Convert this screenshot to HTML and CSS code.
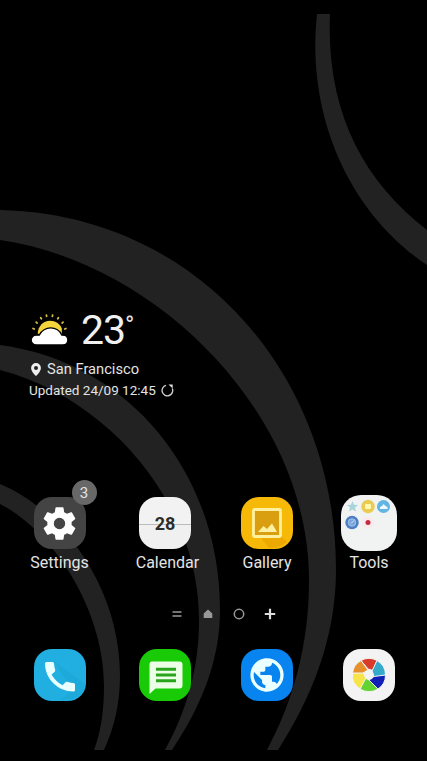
FILE: index.html
```html
<!DOCTYPE html>
<html lang="en">
<head>
<meta charset="utf-8">
<title>Home</title>
<link rel="stylesheet" href="styles.css">
</head>
<body>
<main class="home">
  <svg class="wallpaper" viewBox="0 0 427 761" aria-hidden="true">
    <path d="M317 14C306 115 349 213 427 265V230C362 180 326 110 330 14Z"/>
    <path d="M0 210C195 214 336 373 336 570C336 640 310 700 278 750H267C292 703 309 648 309 580C309 412 155 262 0 240Z"/>
    <path d="M0 345C128 362 220 472 220 610C220 660 202 705 172 750H165C186 712 199 670 199 620C199 500 105 397 0 370Z"/>
    <path d="M0 484C65 511 120 590 120 675C120 702 115 726 104 750H94C101 732 104 710 104 685C104 612 55 532 0 504Z"/>
  </svg>

  <section class="weather">
    <div class="now">
      <svg class="sky" viewBox="0 0 36 31">
        <g stroke="#d9c04a" stroke-width="1.7" stroke-linecap="round">
          <path d="M2 15l1.200.5M5 8.800l1 .9M9.400 4.500l.7 1.100M15 2l.2 1.200M21 2l-.2 1.200M26.700 4.500l-.7 1.100M31.200 8.800l-1 .9M34 15l-1.200.5"/>
        </g>
        <path fill="#f5d53c" d="M6.500 20C7 12.500 12 7.500 18.500 7.500C24 7.500 28 10.500 30 15V21Z"/>
        <path fill="#fff" stroke="#000" stroke-width="1.200" d="M5 31C2.500 31 .2 29 .2 26.300C.2 23.600 2.500 21.500 5 21.500H8C10 17 15 14.500 19 14.500C23.500 14.500 28 17 30 21.500H31C33.700 21.500 35.800 23.600 35.800 26.300C35.800 29 33.700 31 31 31Z"/>
      </svg>
      <span class="temp">23</span><span class="degree">°</span>
    </div>
    <div class="place">
      <svg class="pin" viewBox="0 0 10 13"><path fill="#eee" fill-rule="evenodd" d="M5 0A4.900 4.900 0 0 0 .1 4.900C.1 8.500 5 13 5 13S9.900 8.500 9.900 4.900A4.900 4.900 0 0 0 5 0ZM5 2.900a2 2 0 1 1 0 4a2 2 0 0 1 0-4Z"/></svg>
      <span>San Francisco</span>
    </div>
    <div class="updated">
      <span>Updated 24/09 12:45</span>
      <svg class="refresh" viewBox="0 0 13 13"><path fill="none" stroke="#ccc" stroke-width="1.400" d="M5 1.400A5.300 5.300 0 1 0 11.300 4.500"/><path fill="#ddd" d="M7.500.4h4.200v4.200Z"/></svg>
    </div>
  </section>

  <nav class="row apps">
    <div class="app">
      <div class="tile settings">
        <svg viewBox="0 0 24 24"><path fill="#fff" d="M19.430 12.980c.04-.32.07-.64.07-.98s-.03-.66-.07-.98l2.110-1.650c.19-.15.24-.42.12-.64l-2-3.460c-.12-.22-.39-.3-.61-.22l-2.490 1c-.52-.4-1.080-.73-1.690-.98l-.38-2.650C14.460 2.180 14.250 2 14 2h-4c-.25 0-.46.18-.49.42l-.38 2.650c-.61.25-1.170.59-1.690.98l-2.490-1c-.23-.09-.49 0-.61.22l-2 3.460c-.13.22-.07.49.12.64l2.110 1.650c-.04.32-.07.65-.07.98s.03.66.07.98l-2.110 1.650c-.19.15-.24.42-.12.64l2 3.460c.12.22.39.3.61.22l2.490-1c.52.4 1.080.73 1.690.98l.38 2.650c.03.24.24.42.49.42h4c.25 0 .46-.18.49-.42l.38-2.650c.61-.25 1.170-.59 1.690-.98l2.490 1c.23.09.49 0 .61-.22l2-3.460c.12-.22.07-.49-.12-.64l-2.110-1.650zM12 15.500a3.500 3.500 0 1 1 0-7a3.500 3.500 0 0 1 0 7z"/></svg>
        <span class="badge">3</span>
      </div>
      <span class="label">Settings</span>
    </div>
    <div class="app">
      <div class="tile calendar"><span>28</span></div>
      <span class="label shifted">Calendar</span>
    </div>
    <div class="app">
      <div class="tile gallery">
        <svg viewBox="0 0 52 52"><path fill="#eda900" d="M20 41L40 39L46 45Q40 51 28 51Z"/><rect x="12.500" y="12.500" width="27" height="27" rx="1" fill="#d99f10" stroke="#fff0a0" stroke-width="2.800"/><path fill="#fff0a0" d="M17 35l5.500-6 3.500 3 5-5.500 5 8.500z"/></svg>
      </div>
      <span class="label">Gallery</span>
    </div>
    <div class="app">
      <div class="tile tools">
        <svg viewBox="0 0 56 56">
          <path fill="#a8d4dc" d="M11.500 6l1.500 3.700 4 .3-3 2.600 1 3.900-3.500-2.100-3.500 2.100 1-3.900-3-2.600 4-.3z"/>
          <circle cx="27" cy="11.500" r="6.700" fill="#eacb53"/><rect x="24" y="9" width="6" height="5" rx="1" fill="#fff9b0"/>
          <circle cx="42.500" cy="11.500" r="6.500" fill="#62b5e2"/><path fill="#eafaff" d="M39 14v-2l2-1 1.500-2 2 2 2 1v2z"/>
          <circle cx="11" cy="27.500" r="6.700" fill="#4e7fc4"/><circle cx="11" cy="27.500" r="3.700" fill="#79a5dd" stroke="#a5c8ee"/><path stroke="#d6e7f5" d="M10 28.500l3-3"/>
          <circle cx="27" cy="27.500" r="6" fill="#faeaec"/><circle cx="27" cy="27.500" r="2.500" fill="#c02d43"/>
        </svg>
      </div>
      <span class="label">Tools</span>
    </div>
  </nav>

  <div class="pages">
    <svg viewBox="0 0 12 12"><path stroke="#999" stroke-width="1.600" d="M1.500 4h9M1.500 8h9"/></svg>
    <svg viewBox="0 0 12 12"><path fill="#999" d="M6 1.500L10.300 5.500V10H1.700V5.500Z"/></svg>
    <svg viewBox="0 0 12 12"><circle cx="6" cy="6" r="4.700" fill="none" stroke="#999" stroke-width="1.500"/></svg>
    <svg viewBox="0 0 12 12"><path stroke="#ddd" stroke-width="2.200" d="M.8 6h10.400M6 .8v10.400"/></svg>
  </div>

  <nav class="row dock">
    <div class="app"><div class="tile phone">
      <svg viewBox="0 0 52 52"><path fill="#1ba0d2" d="M20 12L51 35Q50 51 26 51L38 41Z" opacity=".35"/><path fill="#eaffff" d="M12.500 13H18.500Q20 13 20 14.500Q20.200 18 21.200 21Q21.500 22.200 20.500 23L17.500 25.500Q21.500 32.500 28.500 36.300L31.500 33.200Q32.300 32.400 33.500 32.800Q36.500 34 39.500 34Q41 34 41 35.500V41Q41 42.500 39.500 42.500C24 42.500 11 30 11 14.500Q11 13 12.500 13Z"/></svg>
    </div></div>
    <div class="app"><div class="tile messages">
      <svg viewBox="0 0 52 52"><path fill="#eaffe6" d="M13 12.500H40.500Q43.500 12.500 43.500 15.500V36.500Q43.500 39.500 40.500 39.500H16.500L10.500 45V15.500Q10.500 12.500 13 12.500Z"/><path stroke="#28a51c" stroke-width="3" d="M17 20.200h20M17 26h20M17 31.800h20"/></svg>
    </div></div>
    <div class="app"><div class="tile browser">
      <svg viewBox="0 0 24 24"><path fill="#eaffff" d="M12 2C6.480 2 2 6.480 2 12s4.480 10 10 10 10-4.480 10-10S17.520 2 12 2zm-1 17.930c-3.950-.49-7-3.850-7-7.930 0-.62.08-1.210.21-1.790L9 15v1c0 1.100.9 2 2 2v1.930zm6.900-2.540c-.26-.81-1-1.390-1.900-1.390h-1v-3c0-.55-.45-1-1-1H8v-2h2c.55 0 1-.45 1-1V7h2c1.100 0 2-.9 2-2v-.41c2.930 1.190 5 4.060 5 7.410 0 2.080-.8 3.970-2.100 5.390z"/></svg>
    </div></div>
    <div class="app"><div class="tile camera">
      <svg viewBox="-17 -17 34 34" stroke="#f3f3f3" stroke-width="1">
        <path fill="#d93b2b" d="M-8-14.500A16.500 16.500 0 0 1 8-14.500L4-4.500L-1-6Z"/>
        <path fill="#36aaca" d="M8-14.500A16.500 16.500 0 0 1 16.500 0L5 2.500L3-4Z"/>
        <path fill="#101fb4" d="M16.500 0A16.500 16.500 0 0 1 9 14L-.5 5L5 1.500Z"/>
        <path fill="#63d233" d="M9 14A16.500 16.500 0 0 1-9 14L-4 2L0 5Z"/>
        <path fill="#f7e34a" d="M-9 14A16.500 16.500 0 0 1-16.500-2L-6-2.500L-3 3Z"/>
        <path fill="#e5902c" d="M-16.500-2A16.500 16.500 0 0 1-8-14.500L-1-5L-6-2Z"/>
        <circle r="4.800" fill="#f3f3f3" stroke="none"/>
      </svg>
    </div></div>
  </nav>
</main>
</body>
</html>
```
FILE: styles.css
```css
body {
  margin: 0;
  background: #000;
  color: #e4e4e4;
  font-family: Roboto, "Liberation Sans", sans-serif;
}

svg { display: block; }

.home {
  position: relative;
  box-sizing: border-box;
  width: 427px;
  height: 761px;
  padding-top: 310px;
  overflow: hidden;
}

.wallpaper {
  position: absolute;
  inset: 0;
  width: 427px;
  height: 761px;
  fill: #222;
}

.weather {
  position: relative;
  height: 187px;
  padding-left: 29px;
}

.now {
  display: flex;
  height: 49px;
  align-items: flex-start;
  padding-left: 2px;
}

.sky {
  width: 37px;
  height: 32px;
  margin-top: 3px;
  overflow: visible;
}

.temp {
  margin-left: 13px;
  font-size: 41px;
  font-weight: 400;
  line-height: 40px;
  letter-spacing: -1px;
  color: #f0f0f0;
}

.degree {
  font-size: 25px;
  line-height: 31px;
}

.place,
.updated {
  display: flex;
  align-items: center;
  white-space: nowrap;
}

.place {
  height: 20px;
  padding-left: 2px;
  font-size: 14.7px;
}

.pin {
  width: 10px;
  height: 13px;
  margin-right: 6px;
}

.updated {
  height: 22px;
  font-size: 13.5px;
}

.refresh {
  width: 13px;
  height: 13px;
  margin-left: 5px;
}

.row {
  position: relative;
  display: grid;
  grid-template-columns: 105px 106px 98px 106px;
  padding-left: 7px;
}

.app {
  display: flex;
  flex-direction: column;
  align-items: center;
}

.tile {
  position: relative;
  display: flex;
  align-items: center;
  justify-content: center;
  width: 52px;
  height: 52px;
  border-radius: 18px;
}

.apps { height: 111px; }

.label {
  margin-top: 4px;
  font-size: 16px;
  line-height: 20px;
}

.shifted { padding-left: 5px; }

.settings { background: #444; }
.settings svg { width: 39px; height: 39px; }

.badge {
  position: absolute;
  top: -17px;
  right: -11px;
  width: 25px;
  height: 25px;
  border-radius: 50%;
  background: #686868;
  font-size: 15px;
  line-height: 26px;
  text-align: center;
}

.calendar {
  background: linear-gradient(#f2f2f2 27px, #bbb 27px, #bbb 28px, #f0f0f0 28px);
  color: #2c2c2c;
  font-size: 18px;
  font-weight: 700;
}

.gallery { background: #f7b908; }

.tools {
  width: 56px;
  height: 56px;
  margin: -2px 0;
  border-radius: 20px;
  background: #f1f2f2;
}

.pages {
  position: relative;
  display: flex;
  gap: 19px;
  height: 41px;
  padding-left: 171px;
}

.pages svg {
  width: 12px;
  height: 12px;
}

.phone { background: #20afe0; }
.messages { background: #19ca06; }
.browser { background: #0784ef; }
.browser svg { width: 40px; height: 40px; }
.camera { background: #f3f3f3; }
.camera svg { width: 34px; height: 34px; }
```
